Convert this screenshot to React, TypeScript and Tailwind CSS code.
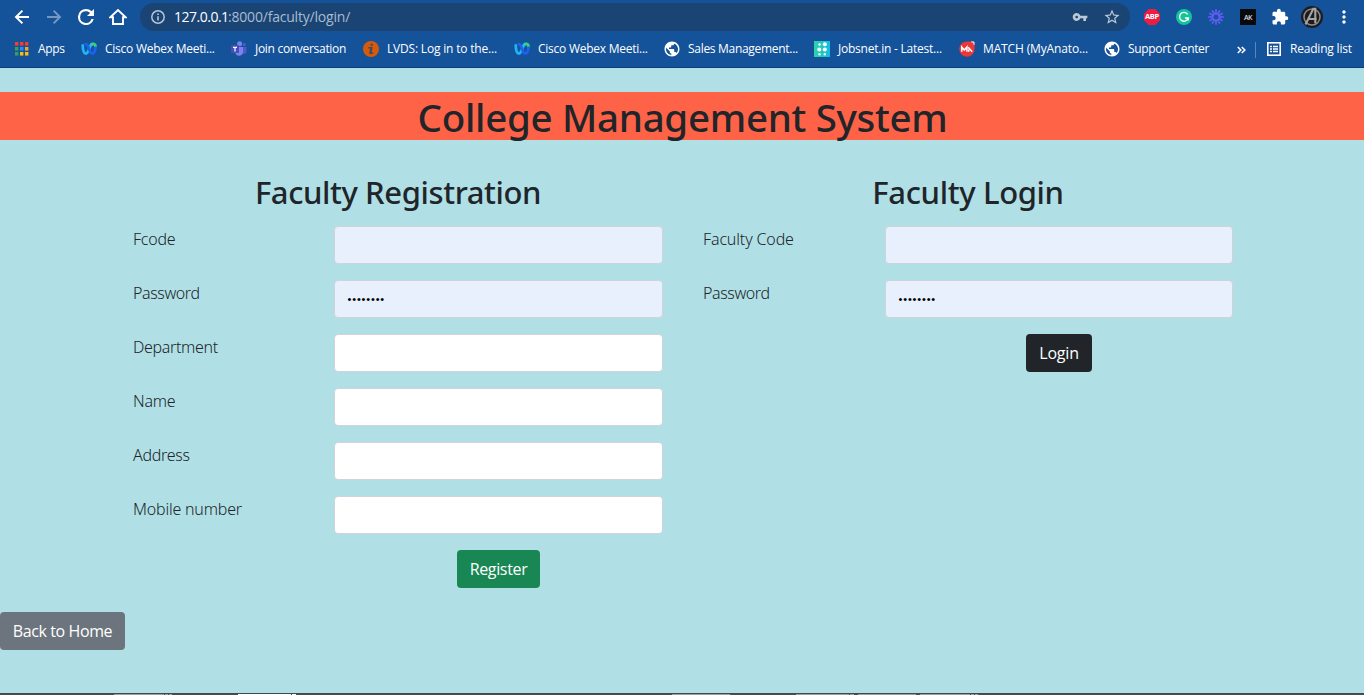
import type { ReactNode } from 'react';
import { MdExtension, MdMoreVert, MdPublic, MdStarBorder, MdVpnKey } from 'react-icons/md';

function BackIcon() {
  return (
    <svg width="16" height="16" viewBox="0 0 16 16" fill="none" stroke="currentColor" strokeWidth="2">
      <path d="M15 8H2.5M8.4 1.6 2 8l6.4 6.4" />
    </svg>
  );
}

function ReloadIcon() {
  return (
    <svg width="16" height="16" viewBox="4 4 16 16" fill="currentColor">
      <path d="M17.65 6.35A7.96 7.96 0 0 0 12 4a8 8 0 1 0 7.73 10h-2.3A5.8 5.8 0 1 1 12 6.2c1.6 0 3 .66 4.1 1.7L13 11h7V4z" />
    </svg>
  );
}

function HomeIcon() {
  return (
    <svg width="18" height="18" viewBox="0 0 18 18" fill="none" stroke="currentColor" strokeWidth="1.9">
      <path d="M1.3 9.3 9 2l7.700 7.300h-2.700V16H4V9.300z" />
    </svg>
  );
}

function InfoIcon() {
  return (
    <svg width="14" height="14" viewBox="0 0 14 14">
      <circle cx="7" cy="7" r="6.200" fill="none" stroke="#b9c6d4" strokeWidth="1.500" />
      <path d="M6.200 6.200h1.600v4.300H6.200zM6.200 3.500h1.600v1.600H6.200z" fill="#b9c6d4" />
    </svg>
  );
}

const APP_ROWS = [
  ['#fb3b30', '#fb3b30', '#fb3b30'],
  ['#34a05a', '#2a8cf4', '#f5a81c'],
  ['#34a05a', '#fbb91a', '#fbb91a'],
];

function AppsIcon() {
  return (
    <svg width="16" height="16" viewBox="0 0 16 16">
      {APP_ROWS.map((row, y) =>
        row.map((fill, x) => <rect key={`${x}-${y}`} x={1 + x * 5} y={1 + y * 5} width="3.400" height="3.600" fill={fill} />),
      )}
    </svg>
  );
}

function WebexIcon() {
  return (
    <svg width="16" height="16" viewBox="0 0 16 16" fill="none" strokeWidth="2.800" strokeLinecap="round">
      <path d="M1.700 4.500c.2 4.300 1.300 8 3.100 8 2 0 3-3 3.900-6 .8-2.500 1.600-3.500 2.800-3.500" stroke="#1fb5f2" />
      <path d="M11 3.200c1.800-.7 3.600.2 3.400 2" stroke="#38d27c" />
      <path d="M4.600 3.200c3.600-.4 3.200 9.300 6.600 9.300 1.900 0 2.900-2.800 3.200-5.500" stroke="#1c62ee" />
    </svg>
  );
}

function TeamsIcon() {
  return (
    <svg width="16" height="16" viewBox="0 0 16 16">
      <circle cx="8.600" cy="2.800" r="2.500" fill="#7b83eb" />
      <circle cx="13.300" cy="3.600" r="1.600" fill="#5059c9" />
      <path d="M10.500 6h5v4.500a2.600 2.600 0 0 1-5 .8z" fill="#5059c9" />
      <path d="M4.500 6H12v5.700a4 4 0 0 1-7.500.8z" fill="#7b83eb" />
      <rect x="0" y="4" width="8" height="8" rx=".7" fill="#464eb8" />
      <path d="M2 5.800h4v1.100H4.600v3.600H3.400V6.900H2z" fill="#fff" />
    </svg>
  );
}

function LvdsIcon() {
  return (
    <svg width="16" height="16" viewBox="0 0 16 16">
      <circle cx="8" cy="8" r="8" fill="#d75a0b" />
      <path d="M7.600 2.700h2.200v2H7.600zM5.500 6h4.200l-1 5.500h1.700l-.4 1.500H6.200l.9-5.500H5.200z" fill="#3f4a5c" />
    </svg>
  );
}

function JobsIcon() {
  return (
    <svg width="16" height="16" viewBox="0 0 16 16">
      <defs>
        <linearGradient id="jobs" x1="0" x2="1">
          <stop stopColor="#2ed3a8" />
          <stop offset="1" stopColor="#12bde4" />
        </linearGradient>
      </defs>
      <path d="M0 0h16v16H0z" fill="url(#jobs)" />
      <g fill="#fff">
        <circle cx="5.500" cy="3.500" r="1.200" />
        <circle cx="10.800" cy="3.300" r="2" />
        <circle cx="5.300" cy="8.500" r="2" />
        <circle cx="10.800" cy="8.500" r="2" />
        <circle cx="5.500" cy="13.300" r="1.200" />
        <circle cx="10.800" cy="13.300" r="1.200" />
      </g>
    </svg>
  );
}

function MatchIcon() {
  return (
    <svg width="16" height="16" viewBox="0 0 16 16">
      <path d="M8 .4h5.500L15.600 3v5A7.700 7.700 0 1 1 8 .4z" fill="#e8383a" />
      <path d="M12.300 1h2.700v2.700" fill="none" stroke="#fff" strokeWidth="1" />
      <path d="M2.700 10.800V6l2.600 3 2.600-3v4.800M9.200 6.200l4 4.600M9.700 10.800V8.500" fill="none" stroke="#fff" strokeWidth="1.500" />
    </svg>
  );
}

function ReadingListIcon() {
  return (
    <svg width="14" height="14" viewBox="0 0 14 14" fill="none" stroke="#fff">
      <rect x=".8" y=".8" width="12.400" height="12.400" strokeWidth="1.600" />
      <path d="M3 4.500h2M6 4.500h5M3 7h2M6 7h5M3 9.500h2M6 9.500h5" strokeWidth="1.300" />
    </svg>
  );
}

function AbpIcon() {
  return (
    <span className="relative flex h-4 w-4 items-center justify-center">
      <svg className="absolute inset-0" width="16" height="16" viewBox="0 0 16 16">
        <path d="M4.700 0h6.600L16 4.700v6.600L11.300 16H4.700L0 11.300V4.700z" fill="#ee1c40" />
      </svg>
      <span className="relative text-[7.500px] leading-none font-bold tracking-[-0.3px] text-white">ABP</span>
    </span>
  );
}

function GrammarlyIcon() {
  return (
    <svg width="16" height="16" viewBox="0 0 16 16" fill="none" stroke="#fff" strokeWidth="1.400">
      <circle cx="8" cy="8" r="8" fill="#15c39a" stroke="none" />
      <path d="M11.600 5.300A4.400 4.400 0 1 0 12.200 9H9M12.200 8.300v3.200" />
    </svg>
  );
}

const RAYS = [0, 30, 60, 90, 120, 150, 180, 210, 240, 270, 300, 330];

function LoomIcon() {
  return (
    <svg width="16" height="16" viewBox="0 0 16 16" fill="none" stroke="#625df5">
      {RAYS.map((a) => (
        <path key={a} d="M8 5V.3" strokeWidth="1.700" transform={`rotate(${a} 8 8)`} />
      ))}
      <circle cx="8" cy="8" r="3.400" strokeWidth="1.800" />
    </svg>
  );
}

function AvatarIcon() {
  return (
    <svg width="22" height="22" viewBox="0 0 22 22" fill="none">
      <circle cx="11" cy="11" r="11" fill="#1c1c1e" />
      <circle cx="11" cy="11" r="8" stroke="#8b8b8d" strokeWidth="1.500" />
      <path d="M4.500 18.500 12.300 2.700h2v14.500M7.700 13h8" stroke="#a5a5a7" strokeWidth="2.100" />
    </svg>
  );
}

interface Bookmark {
  label: string;
  icon: ReactNode;
  width: string;
  tracking: string;
}

const globe = <MdPublic size={18} className="-m-px shrink-0" />;

const BOOKMARKS: Bookmark[] = [
  { label: 'Apps', icon: <AppsIcon />, width: 'w-[67px]', tracking: 'tracking-[-0.3px]' },
  { label: 'Cisco Webex Meeti...', icon: <WebexIcon />, width: 'w-[150px]', tracking: 'tracking-[-0.25px]' },
  { label: 'Join conversation', icon: <TeamsIcon />, width: 'w-[132px]', tracking: 'tracking-[-0.3px]' },
  { label: 'LVDS: Log in to the...', icon: <LvdsIcon />, width: 'w-[151px]', tracking: 'tracking-[-0.19px]' },
  { label: 'Cisco Webex Meeti...', icon: <WebexIcon />, width: 'w-[150px]', tracking: 'tracking-[-0.25px]' },
  { label: 'Sales Management...', icon: globe, width: 'w-[150px]', tracking: 'tracking-[-0.3px]' },
  { label: 'Jobsnet.in - Latest...', icon: <JobsIcon />, width: 'w-[145px]', tracking: 'tracking-[-0.23px]' },
  { label: 'MATCH (MyAnato...', icon: <MatchIcon />, width: 'w-[145px]', tracking: 'tracking-[-0.14px]' },
  { label: 'Support Center', icon: globe, width: 'w-[132px]', tracking: 'tracking-[-0.33px]' },
];

function BrowserBar() {
  return (
    <header className="flex h-[68px] flex-col border-b border-[#0e3d75] bg-[#14529a] text-white">
      <div className="flex h-[34px] items-center">
        <nav className="flex w-[140px] items-center gap-4 pl-[14px]">
          <BackIcon />
          <span className="flex rotate-180 text-[#7597c2]"><BackIcon /></span>
          <ReloadIcon />
          <span className="-mx-px flex"><HomeIcon /></span>
        </nav>
        <div className="flex h-7 w-[990px] items-center rounded-full bg-[#1a4474] pr-[9px] pl-[11px]">
          <InfoIcon />
          <p className="ml-[9px] flex text-sm text-[#a9bccf]">
            <span className="w-[54px] tracking-[-0.5px] whitespace-nowrap text-white">127.0.0.1</span>
            <span className="tracking-[-0.2px]">:8000/faculty/login/</span>
          </p>
          <div className="ml-auto flex items-center gap-[15px] text-[#bcc8d5]">
            <MdVpnKey size={16} />
            <MdStarBorder size={18} />
          </div>
        </div>
        <div className="flex items-center gap-4 pl-[14px]">
          <AbpIcon />
          <GrammarlyIcon />
          <LoomIcon />
          <span className="flex h-4 w-4 items-center justify-center bg-[#08090b] text-[7px] leading-none font-semibold tracking-[-0.5px] text-[#d7dbe0]">AK</span>
          <MdExtension size={18} className="-mr-px -ml-px" />
          <span className="-mx-[3px] flex"><AvatarIcon /></span>
          <MdMoreVert size={20} className="-ml-[2px]" />
        </div>
      </div>
      <div className="flex h-[31px] items-center pl-[14px] text-xs">
        {BOOKMARKS.map((b, i) => (
          <div key={i} className={`flex shrink-0 items-center gap-2 ${b.width}`}>
            <span className="-mt-px flex w-4 shrink-0">{b.icon}</span>
            <span className={`-mt-px whitespace-nowrap ${b.tracking}`}>{b.label}</span>
          </div>
        ))}
        <svg className="ml-px" width="9" height="8" viewBox="0 0 9 8" fill="none" stroke="#fff" strokeWidth="1.600">
          <path d="m.8 1 3 3-3 3M4.800 1l3 3-3 3" />
        </svg>
        <span className="ml-[9px] h-4 w-px bg-[#5b86b8]" />
        <div className="ml-[11px] flex items-center gap-[9px]">
          <span className="-mt-px flex"><ReadingListIcon /></span>
          <span className="-mt-px tracking-[-0.2px] whitespace-nowrap">Reading list</span>
        </div>
      </div>
    </header>
  );
}

interface Field {
  label: string;
  tracking: string;
  filled?: boolean;
  value?: string;
}

const REGISTRATION: Field[] = [
  { label: 'Fcode', tracking: 'tracking-[-0.25px]', filled: true },
  { label: 'Password', tracking: 'tracking-[-0.4px]', filled: true, value: '••••••••' },
  { label: 'Department', tracking: 'tracking-[-0.34px]' },
  { label: 'Name', tracking: 'tracking-[-0.25px]' },
  { label: 'Address', tracking: 'tracking-[-0.3px]' },
  { label: 'Mobile number', tracking: 'tracking-[-0.2px]' },
];

const LOGIN: Field[] = [
  { label: 'Faculty Code', tracking: 'tracking-[-0.14px]', filled: true },
  { label: 'Password', tracking: 'tracking-[-0.4px]', filled: true, value: '••••••••' },
];

function PasswordDots({ value }: { value: string }) {
  return (
    <span className="flex text-[11px] leading-none text-black">
      {[...value].map((dot, i) => (
        <span key={i} className="w-[4.700px] font-['Liberation_Sans'] tracking-normal">{dot}</span>
      ))}
    </span>
  );
}

function Row({ field }: { field: Field }) {
  return (
    <>
      <label className={`h-[38px] font-['Noto_Sans'] font-light leading-[26px] ${field.tracking}`}>{field.label}</label>
      <div className={`flex h-[38px] items-center rounded border border-[#ced4da] pt-px pl-[12.500px] ${field.filled ? 'bg-[#e8f0fe]' : 'bg-white'}`}>
        {field.value && <PasswordDots value={field.value} />}
      </div>
    </>
  );
}

export default function App() {
  return (
    <div className="flex h-[695px] w-[1364px] flex-col overflow-hidden bg-[#b0e0e6] font-['Open_Sans','Noto_Sans',sans-serif] text-[#212529]">
      <BrowserBar />
      <main className="flex flex-1 flex-col items-start">
        <h1 className="mt-6 h-12 w-full bg-[#ff6347] pt-px pl-px text-center font-['Noto_Sans'] text-[38.500px] leading-[48px] font-medium tracking-[-0.3px]">
          College Management System
        </h1>
        <div className="flex w-full gap-10 px-[133px] pt-[33px]">
          <section className="w-[530px]">
            <h2 className="mb-[15px] text-center font-['Noto_Sans'] text-[31px] leading-[38px] font-medium tracking-[-0.4px]">Faculty Registration</h2>
            <form className="grid grid-cols-[201px_329px] gap-y-4">
              {REGISTRATION.map((f) => <Row key={f.label} field={f} />)}
              <button type="button" className="col-start-2 h-[38px] w-[83px] justify-self-center rounded bg-[#198754] tracking-[-0.34px] text-white">
                Register
              </button>
            </form>
          </section>
          <section className="w-[530px]">
            <h2 className="mb-[15px] text-center font-['Noto_Sans'] text-[31px] leading-[38px] font-medium tracking-[-0.35px]">Faculty Login</h2>
            <form className="grid grid-cols-[182px_348px] gap-y-4">
              {LOGIN.map((f) => <Row key={f.label} field={f} />)}
              <button type="button" className="col-start-2 h-[38px] w-[66px] justify-self-center rounded bg-[#212529] tracking-[-0.2px] text-white">
                Login
              </button>
            </form>
          </section>
        </div>
        <button type="button" className="mt-6 h-[38px] w-[125px] rounded bg-[#6c757d] tracking-[-0.4px] text-white">
          Back to Home
        </button>
      </main>
      <footer className="flex h-[2px] border-t border-[#3d4a4e] bg-[#504a50]">
        <span className="ml-[114px] h-px w-[50px] bg-[#a39ca0]" />
        <span className="ml-px h-px w-[3px] bg-[#a39ca0]" />
        <span className="ml-px h-px w-[3px] bg-[#a39ca0]" />
        <span className="ml-[66px] h-px w-[53px] bg-white" />
        <span className="ml-px h-px w-[4px] bg-white" />
        <span className="ml-[376px] h-px w-[58px] bg-[#a39ca0]" />
        <span className="ml-[66px] h-px w-[53px] bg-[#a39ca0]" />
        <span className="ml-px h-px w-[4px] bg-[#a39ca0]" />
        <span className="ml-[4px] h-px w-[58px] bg-[#a39ca0]" />
        <span className="ml-[4px] h-px w-[50px] bg-[#a39ca0]" />
        <span className="ml-px h-px w-[3px] bg-[#a39ca0]" />
        <span className="ml-px h-px w-[3px] bg-[#a39ca0]" />
      </footer>
    </div>
  );
}
